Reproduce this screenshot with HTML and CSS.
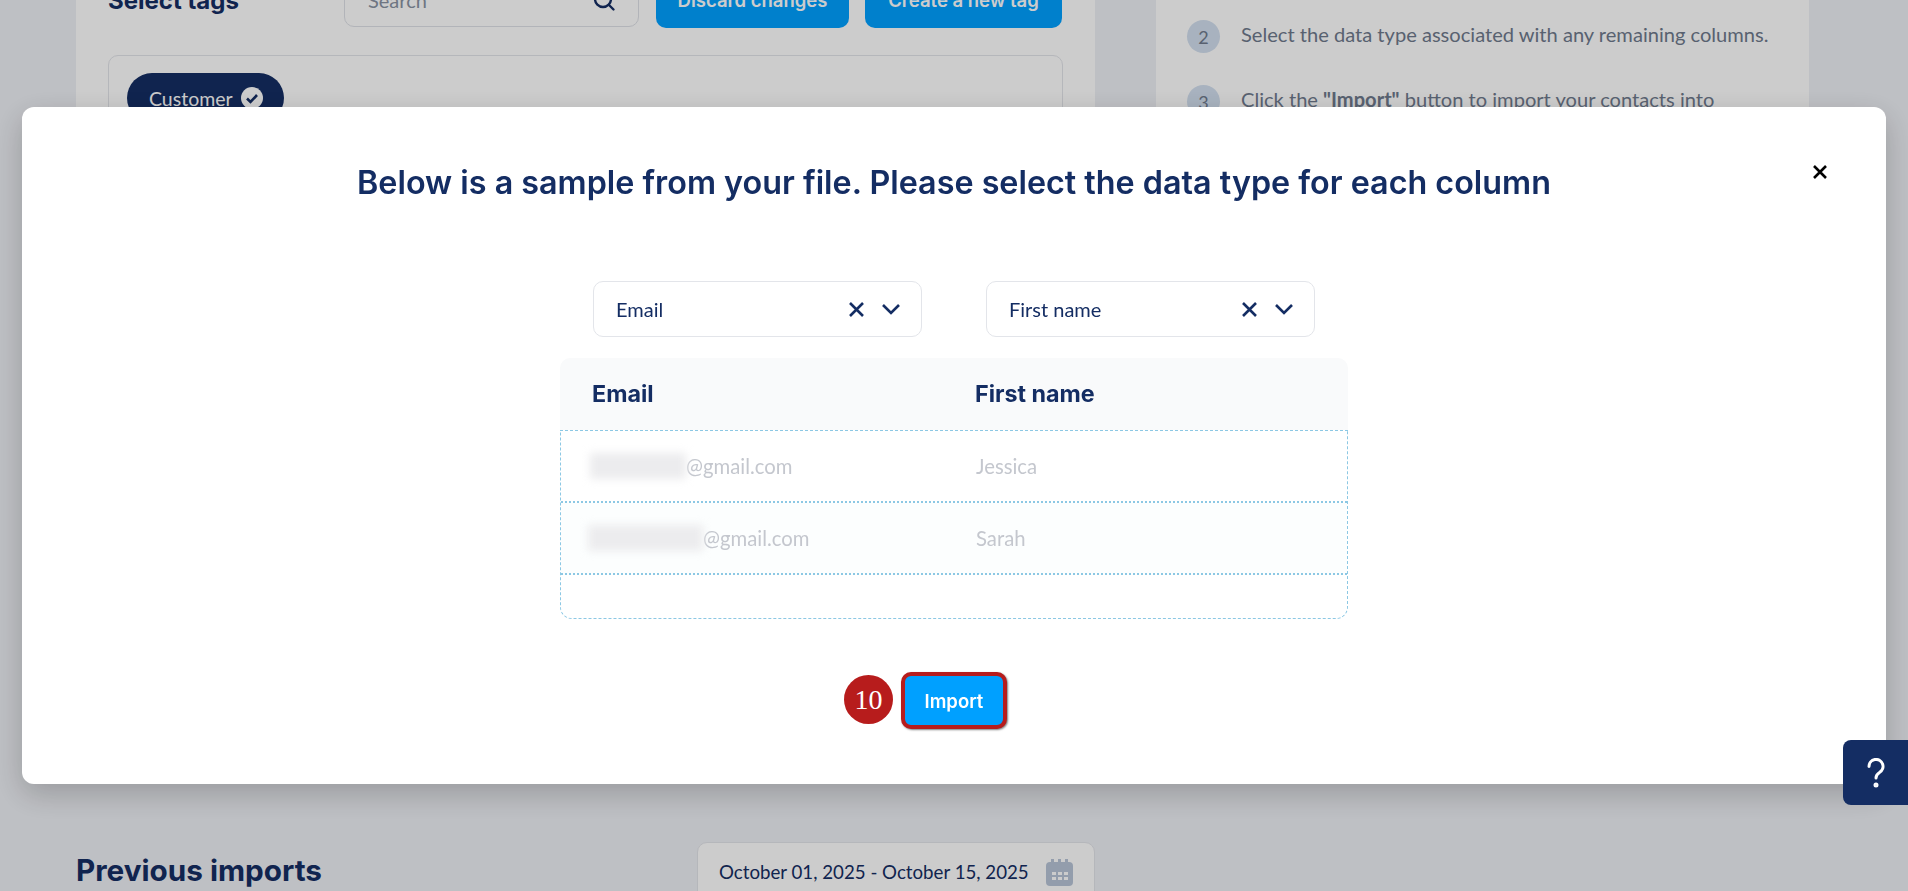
FILE: index.html
```html
<!DOCTYPE html>
<html>
<head>
<meta charset="UTF-8">
<title>Import contacts</title>
<link rel="stylesheet" href="styles.css">
</head>
<body>
	<div class="page">
		<div class="columns">
			<div class="card tagCard">
				<div class="tagHeader">
					<h2 class="tagTitle">Select tags</h2>
					<div class="searchBox">
						<span>Search</span>
						<svg width="24" height="24" viewBox="0 0 24 24" fill="none" stroke="#142d63" stroke-width="2.4" stroke-linecap="round"><circle cx="11" cy="11" r="8"/><path d="M17 17l4.500 4.500"/></svg>
					</div>
					<button class="blueButton discard">Discard changes</button>
					<button class="blueButton create">Create a new tag</button>
				</div>
				<div class="tagBox">
					<div class="chip">
						Customer
						<svg width="22" height="22" viewBox="0 0 22 22"><circle cx="11" cy="11" r="11" fill="#fff"/><path d="M6 11.500l3.500 3.500 6.500-7" fill="none" stroke="#142d63" stroke-width="2.600"/></svg>
					</div>
				</div>
			</div>
			<div class="card stepCard">
				<div class="step"><span class="stepNum">2</span><span>Select the data type associated with any remaining columns.</span></div>
				<div class="step"><span class="stepNum">3</span><span>Click the <b>"Import"</b> button to import your contacts into</span></div>
			</div>
		</div>
		<div class="imports">
			<h2 class="importsTitle">Previous imports</h2>
			<div class="dateBox">
				<span>October 01, 2025 - October 15, 2025</span>
				<svg width="27" height="27" viewBox="0 0 27 27" fill="#b8c5d8"><path d="M5 0h3v4H5zM12 0h3v4h-3zM19 0h3v4h-3z"/><rect x="0" y="3" width="27" height="24" rx="4"/><g fill="#fff"><rect x="6" y="13" width="4" height="3"/><rect x="12" y="13" width="4" height="3"/><rect x="18" y="13" width="4" height="3"/><rect x="6" y="18" width="4" height="3"/><rect x="12" y="18" width="4" height="3"/><rect x="18" y="18" width="4" height="3"/></g></svg>
			</div>
		</div>
	</div>

	<div class="overlay"></div>

	<div class="modal">
		<h1 class="modalTitle">Below is a sample from your file. Please select the data type for each column</h1>
		<svg class="closeIcon" width="14" height="14" viewBox="0 0 14 14" stroke="#000" stroke-width="2.600"><path d="M1 1l12 12M13 1L1 13"/></svg>

		<div class="selectRow">
			<div class="selectBox">
				<span class="selectValue">Email</span>
				<svg width="15" height="15" viewBox="0 0 15 15" stroke="#142d63" stroke-width="2.600"><path d="M1 1l13 13M14 1L1 14"/></svg>
				<svg class="chevron" width="20" height="12" viewBox="0 0 20 12" fill="none" stroke="#142d63" stroke-width="2.600"><path d="M2 2l8 8 8-8"/></svg>
			</div>
			<div class="selectBox">
				<span class="selectValue">First name</span>
				<svg width="15" height="15" viewBox="0 0 15 15" stroke="#142d63" stroke-width="2.600"><path d="M1 1l13 13M14 1L1 14"/></svg>
				<svg class="chevron" width="20" height="12" viewBox="0 0 20 12" fill="none" stroke="#142d63" stroke-width="2.600"><path d="M2 2l8 8 8-8"/></svg>
			</div>
		</div>

		<div class="sample">
			<div class="sampleHead">
				<div class="cellEmail">Email</div>
				<div>First name</div>
			</div>
			<div class="sampleRows">
				<div class="sampleRow">
					<div class="cellEmail"><span class="blurred shortBlur"></span>@gmail.com</div>
					<div>Jessica</div>
				</div>
				<div class="sampleRow tinted">
					<div class="cellEmail"><span class="blurred longBlur"></span>@gmail.com</div>
					<div>Sarah</div>
				</div>
				<div class="sampleEnd"></div>
			</div>
		</div>

		<div class="importRow">
			<span class="stepBadge">10</span>
			<button class="importButton">Import</button>
		</div>
	</div>

	<div class="helpButton">
		<svg width="18" height="30" viewBox="0 0 18 30" fill="none" stroke="#fff" stroke-width="3" stroke-linecap="round"><path d="M2 8.500a7 7 0 1 1 10.500 6c-2.500 1.500-3.500 2.500-3.500 5.500"/><circle cx="9" cy="27" r="1" fill="#fff"/></svg>
	</div>
</body>
</html>
```

FILE: styles.css
```css
* {
	box-sizing: border-box;
}

html, body {
	height: 100%;
}

body {
	margin: 0;
	overflow: hidden;
	background: #eef0f5;
	color: #142d63;
	font-family: Lato, "Open Sans", sans-serif;
}

h1, h2 {
	margin: 0;
	font-family: Inter, sans-serif;
}

.page {
	height: 891px;
	padding: 0 99px 0 76px;
	overflow: hidden;
}

.columns {
	display: grid;
	grid-template-columns: 1019px 653px;
	gap: 61px;
	height: 902px;
	margin-top: -60px;
}

.card {
	background: #fff;
}

.tagCard {
	height: 700px;
	padding: 32px;
}

.tagHeader {
	display: flex;
	align-items: center;
	height: 56px;
}

.tagTitle {
	width: 236px;
	font-size: 24px;
	font-weight: 700;
}

.searchBox {
	display: flex;
	align-items: center;
	justify-content: space-between;
	width: 295px;
	height: 54px;
	margin-right: 17px;
	padding: 0 22px 0 23px;
	border: 1px solid #dfe2e8;
	border-radius: 10px;
	font-size: 20px;
	color: #8a93a3;
}

.blueButton {
	height: 56px;
	border: none;
	border-radius: 10px;
	background: #00a0ff;
	color: #fff;
	font-family: Inter, sans-serif;
	font-size: 18.500px;
	font-weight: 600;
}

.discard {
	width: 193px;
	margin-right: 16px;
}

.create {
	width: 197px;
}

.tagBox {
	height: 300px;
	margin-top: 27px;
	padding: 17px 18px;
	border: 1px solid #e3e5ea;
	border-radius: 10px;
}

.chip {
	display: inline-flex;
	align-items: center;
	gap: 8px;
	height: 50px;
	padding: 0 21px 0 22px;
	border-radius: 25px;
	background: #142d63;
	color: #fff;
	font-size: 19.500px;
}

.stepCard {
	height: 700px;
	padding-top: 80px;
	padding-left: 31px;
	color: #6f7a8d;
	font-size: 20.100px;
}

.step {
	display: flex;
	gap: 21px;
	height: 65px;
	line-height: 28px;
}

.stepNum {
	display: flex;
	align-items: center;
	justify-content: center;
	width: 33px;
	height: 33px;
	border-radius: 50%;
	background: #d2dfef;
	font-size: 18px;
}

.imports {
	display: flex;
	align-items: flex-start;
	justify-content: space-between;
	width: 1019px;
}

.importsTitle {
	padding-top: 10px;
	font-size: 29.700px;
	font-weight: 700;
}

.dateBox {
	display: flex;
	align-items: center;
	justify-content: space-between;
	width: 398px;
	height: 60px;
	padding: 0 21px;
	border: 1px solid #e3e5ea;
	border-radius: 10px;
	background: #fff;
	font-size: 18.700px;
}

.overlay {
	position: fixed;
	inset: 0;
	background: rgba(0, 0, 0, 0.2);
}

.modal {
	position: fixed;
	top: 107px;
	left: 22px;
	display: flex;
	flex-direction: column;
	align-items: center;
	width: 1864px;
	height: 677px;
	padding-top: 56px;
	border-radius: 12px;
	background: #fff;
	box-shadow: 0 10px 30px rgba(0, 0, 0, 0.2);
}

.modalTitle {
	font-size: 32.300px;
	font-weight: 600;
	line-height: 40px;
	white-space: nowrap;
}

.closeIcon {
	position: absolute;
	top: 58px;
	right: 59px;
}

.selectRow {
	display: flex;
	gap: 64px;
	margin-top: 78px;
}

.selectBox {
	display: flex;
	align-items: center;
	width: 329px;
	height: 56px;
	padding: 0 20px 0 22px;
	border: 1px solid #e3e5ea;
	border-radius: 10px;
	font-size: 20px;
}

.selectValue {
	flex: 1;
}

.chevron {
	margin-left: 17px;
}

.sample {
	width: 788px;
	margin-top: 21px;
	font-size: 20.300px;
}

.sampleHead {
	display: flex;
	align-items: center;
	height: 72px;
	padding-bottom: 2px;
	border-radius: 10px 10px 0 0;
	background: #f9fafb;
	font-family: Inter, sans-serif;
	font-size: 23.300px;
	font-weight: 700;
}

.cellEmail {
	display: flex;
	align-items: center;
	width: 415px;
	padding-left: 32px;
}

.sampleRows {
	border: 1px dashed #8cc8e4;
	border-radius: 0 0 12px 12px;
	color: #c4c7ce;
}

.sampleRow {
	display: flex;
	align-items: center;
	height: 72px;
	border-bottom: 2px dotted #8cc8e4;
}

.sampleRow .cellEmail {
	padding-left: 0;
}

.tinted {
	background: #fcfefe;
}

.sampleEnd {
	height: 43px;
}

.blurred {
	height: 26px;
	background: #ececee;
	filter: blur(4px);
}

.shortBlur {
	width: 96px;
	margin-left: 29px;
}

.longBlur {
	width: 115px;
	margin-left: 27px;
}

.importRow {
	position: relative;
	margin-top: 53px;
}

.stepBadge {
	position: absolute;
	top: 3px;
	right: calc(100% + 8px);
	display: flex;
	align-items: center;
	justify-content: center;
	width: 49px;
	height: 49px;
	border-radius: 50%;
	background: #b71c1c;
	color: #fff;
	font-family: "Liberation Serif", serif;
	font-size: 28px;
}

.importButton {
	display: block;
	width: 106px;
	height: 57px;
	border: 4px solid #b71c1c;
	border-radius: 10px;
	background: #00a0ff;
	box-shadow: 1px 1px 2px rgba(0, 0, 0, 0.5);
	color: #fff;
	font-family: Inter, sans-serif;
	font-size: 18.500px;
	font-weight: 600;
}

.helpButton {
	position: fixed;
	top: 740px;
	right: 0;
	display: flex;
	align-items: center;
	justify-content: center;
	width: 65px;
	height: 65px;
	border-radius: 8px 0 0 8px;
	background: #142d63;
}
```
